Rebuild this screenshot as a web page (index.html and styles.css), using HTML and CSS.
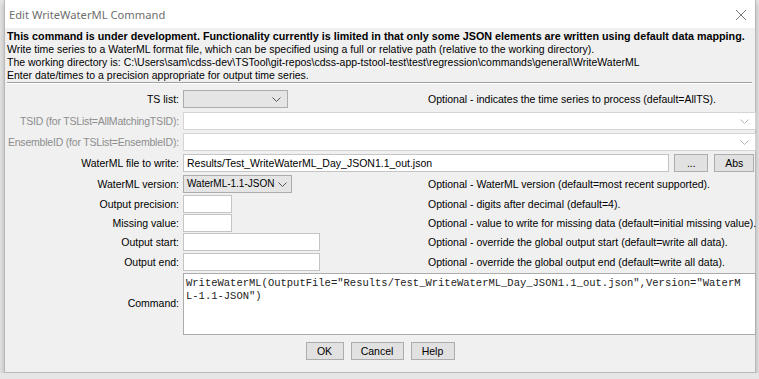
FILE: index.html
```html
<!DOCTYPE html>
<html>
<head>
<meta charset="UTF-8">
<title>Edit WriteWaterML Command</title>
<link rel="stylesheet" href="styles.css">
</head>
<body>
<div class="dialog">
	<div class="titlebar">
		<span class="title">Edit WriteWaterML Command</span>
		<svg class="close" width="12" height="12" viewBox="0 0 12 12">
			<path d="M1 1 L11 11 M11 1 L1 11" stroke="#7a7a7a" stroke-width="1" fill="none"/>
		</svg>
	</div>
	<div class="content">
		<div class="intro">
			<div class="warn">This command is under development. Functionality currently is limited in that only some JSON elements are written using default data mapping.</div>
			<div>Write time series to a WaterML format file, which can be specified using a full or relative path (relative to the working directory).</div>
			<div>The working directory is: C:\Users\sam\cdss-dev\TSTool\git-repos\cdss-app-tstool-test\test\regression\commands\general\WriteWaterML</div>
			<div>Enter date/times to a precision appropriate for output time series.</div>
		</div>
		<div class="sep"></div>

		<div class="form">
			<label>TS list:</label>
			<div><span class="select ts-list"><svg class="chev" width="9" height="5" viewBox="0 0 9 5"><path d="M0.5 0.5 L4.5 4.5 L8.5 0.5" stroke="#555" fill="none"/></svg></span></div>
			<div class="note">Optional - indicates the time series to process (default=AllTS).</div>

			<label class="disabled">TSID (for TSList=AllMatchingTSID):</label>
			<div class="wide"><span class="combo"><svg class="chev" width="9" height="5" viewBox="0 0 9 5"><path d="M0.5 0.5 L4.5 4.5 L8.5 0.5" stroke="#b4b4b4" fill="none"/></svg></span></div>

			<label class="disabled">EnsembleID (for TSList=EnsembleID):</label>
			<div class="wide"><span class="combo"><svg class="chev" width="9" height="5" viewBox="0 0 9 5"><path d="M0.5 0.5 L4.5 4.5 L8.5 0.5" stroke="#b4b4b4" fill="none"/></svg></span></div>

			<label>WaterML file to write:</label>
			<div class="wide file-row">
				<span class="input file">Results/Test_WriteWaterML_Day_JSON1.1_out.json</span>
				<span class="button dots">...</span>
				<span class="button abs">Abs</span>
			</div>

			<label>WaterML version:</label>
			<div><span class="select version">WaterML-1.1-JSON<svg class="chev" width="9" height="5" viewBox="0 0 9 5"><path d="M0.5 0.5 L4.5 4.5 L8.5 0.5" stroke="#555" fill="none"/></svg></span></div>
			<div class="note">Optional - WaterML version (default=most recent supported).</div>

			<label>Output precision:</label>
			<div><span class="input small"></span></div>
			<div class="note">Optional - digits after decimal (default=4).</div>

			<label>Missing value:</label>
			<div><span class="input small"></span></div>
			<div class="note">Optional - value to write for missing data (default=initial missing value).</div>

			<label>Output start:</label>
			<div><span class="input date"></span></div>
			<div class="note">Optional - override the global output start (default=write all data).</div>

			<label>Output end:</label>
			<div><span class="input date"></span></div>
			<div class="note">Optional - override the global output end (default=write all data).</div>

			<label>Command:</label>
			<div class="wide"><div class="command">WriteWaterML(OutputFile="Results/Test_WriteWaterML_Day_JSON1.1_out.json",Version="WaterML-1.1-JSON")</div></div>
		</div>

		<div class="buttons">
			<span class="button ok">OK</span>
			<span class="button cancel">Cancel</span>
			<span class="button help">Help</span>
		</div>
	</div>
</div>
</body>
</html>
```

FILE: styles.css
```css
body {
	margin: 0;
	background-color: #e6e6e6;
	font-family: 'Liberation Sans', Arial, sans-serif;
	font-size: 10.5px;
	color: #000;
}

.dialog {
	margin-left: 4px;
	width: 750px;
	height: 372px;
	border: 1px solid #b9b9b9;
	border-top: none;
	background-color: #f0f0f0;
	box-shadow: 0 3px 6px rgba(0, 0, 0, 0.25);
}

.titlebar {
	height: 28px;
	background-color: #fff;
	display: flex;
	align-items: center;
	justify-content: space-between;
	padding: 0 8px 0 4px;
}

.title {
	font-family: 'Noto Sans', 'Open Sans', sans-serif;
	font-size: 11.2px;
	color: #6e6e6e;
	padding-top: 1px;
}

.close {
	margin-top: 1px;
}

.intro {
	padding: 2px 0 0 2px;
	line-height: 13px;
}

.warn {
	font-weight: bold;
	font-size: 10.75px;
}

.sep {
	margin: 0 3px 0 2px;
	border-top: 1px solid #a0a0a0;
	border-bottom: 1px solid #fff;
}

.form {
	display: grid;
	grid-template-columns: 174px 241px 1fr;
	grid-template-rows: 22px 21px 21px 21px 21px 19px 19px 19px 21px 62px;
	column-gap: 4px;
	align-items: center;
	margin-top: 4px;
	padding-right: 1px;
}

label {
	display: flex;
	justify-content: flex-end;
	white-space: nowrap;
}

label.disabled {
	color: #8d8d8d;
	letter-spacing: -0.2px;
}

.wide {
	grid-column: 2 / 4;
}

.note {
	white-space: nowrap;
}

.select, .combo, .input {
	display: flex;
	align-items: center;
	box-sizing: border-box;
	height: 18px;
	position: relative;
}

.select {
	background-color: #e5e5e5;
	border: 1px solid #acacac;
	padding-left: 3px;
}

.ts-list {
	width: 105px;
}

.version {
	width: 109px;
	font-size: 10px;
}

.combo {
	background-color: #fff;
	border: 1px solid #d5d5d5;
	width: 100%;
}

.chev {
	position: absolute;
	right: 6px;
	top: 6px;
}

.version .chev {
	right: 4px;
}

.input {
	background-color: #fff;
	border: 1px solid #c4c4c4;
	padding-left: 3px;
}

.small {
	width: 49px;
}

.date {
	width: 137px;
}

.file-row {
	display: flex;
	align-items: center;
	padding-right: 2px;
}

.file {
	flex: 1;
}

.button {
	display: inline-flex;
	align-items: center;
	justify-content: center;
	box-sizing: border-box;
	height: 18px;
	background-color: #e1e1e1;
	border: 1px solid #adadad;
}

.dots {
	width: 34px;
	margin-left: 5px;
}

.abs {
	width: 40px;
	margin-left: 6px;
}

.command {
	box-sizing: border-box;
	height: 62px;
	margin-top: 1px;
	background-color: #fff;
	border: 1px solid #acacac;
	padding: 3px 10px 0 2px;
	font-family: 'Liberation Mono', 'Courier New', monospace;
	font-size: 10.5px;
	line-height: 13px;
	color: #222;
	word-break: break-all;
}

.buttons {
	display: flex;
	justify-content: center;
	gap: 6px;
	margin-top: 8px;
}

.ok {
	width: 38px;
}

.cancel {
	width: 53px;
	margin-left: 1px;
}

.help {
	width: 44px;
	margin-left: 1px;
}
```
